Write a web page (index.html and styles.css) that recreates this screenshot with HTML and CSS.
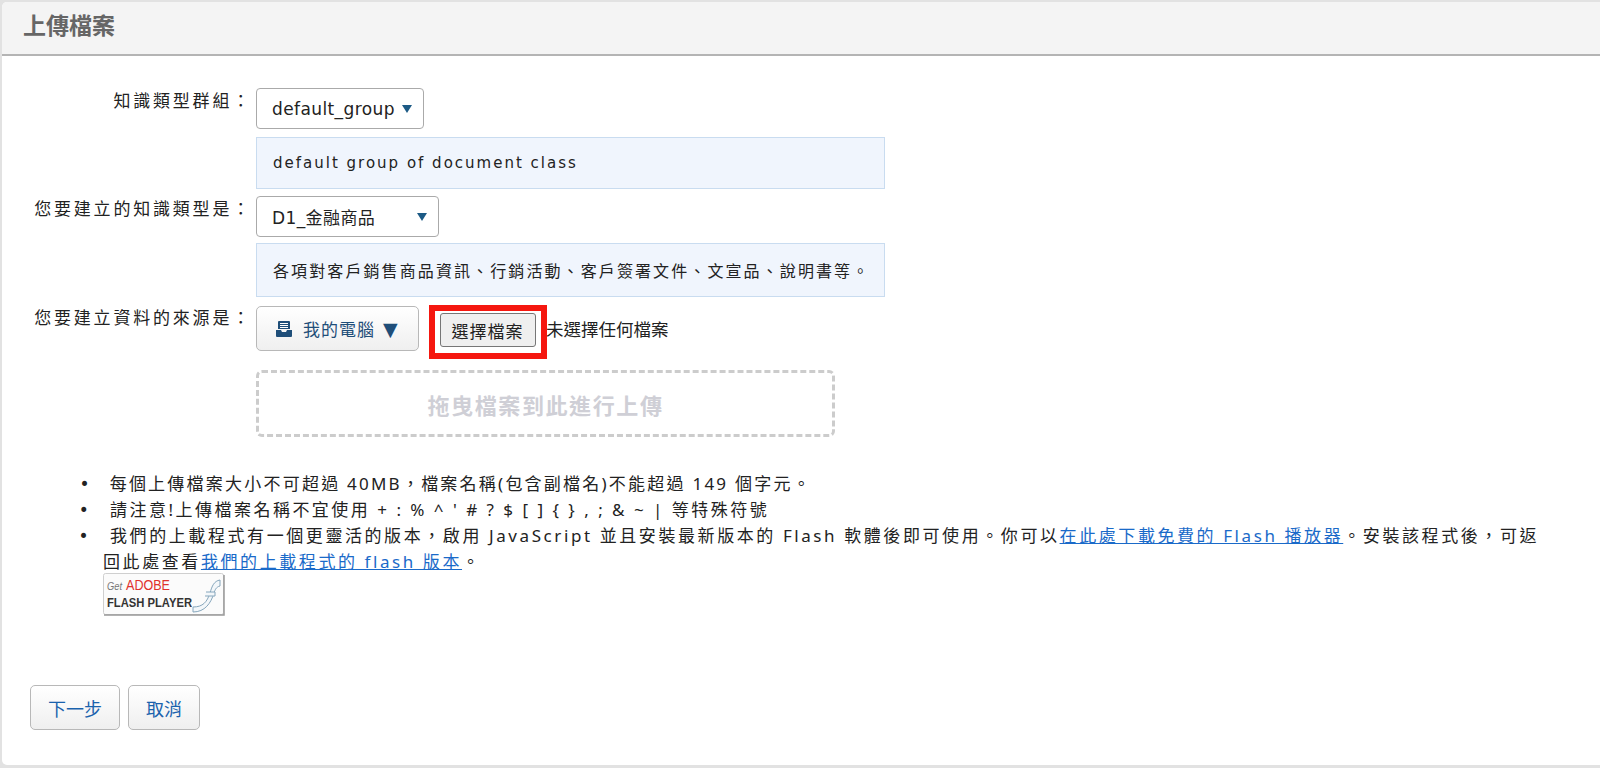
FILE: index.html
```html
<!DOCTYPE html>
<html lang="zh-Hant">
<head>
<meta charset="utf-8">
<title>上傳檔案</title>
<link rel="stylesheet" href="styles.css">
</head>
<body>
<main class="panel">
  <header class="panel-head"><h1>上傳檔案</h1></header>
  <div class="panel-body">
    <form class="form">
      <div class="label">知識類型群組：</div>
      <div class="field">
        <div class="select select-group">default_group<span class="caret"></span></div>
        <div class="info info-latin">default group of document class</div>
      </div>
      <div class="label">您要建立的知識類型是：</div>
      <div class="field">
        <div class="select select-type">D1_金融商品<span class="caret"></span></div>
        <div class="info info-cjk">各項對客戶銷售商品資訊、行銷活動、客戶簽署文件、文宣品、說明書等。</div>
      </div>
      <div class="label">您要建立資料的來源是：</div>
      <div class="field">
        <div class="source-row">
          <button type="button" class="btn btn-source">
            <svg class="drawer" viewBox="0 0 18 18" aria-hidden="true"><path d="M4 1h10a1 1 0 0 1 1 1v7H3V2a1 1 0 0 1 1-1z" fill="#1f4e79"/><path d="M5 3.5h8M5 5.5h8M5 7.5h8" stroke="#fff" stroke-width="1"/><path d="M1 10h5l1 2h4l1-2h5v6a1 1 0 0 1-1 1H2a1 1 0 0 1-1-1z" fill="#1f4e79"/></svg>
            <span>我的電腦</span><span class="arrow">▼</span>
          </button>
          <span class="highlight"><button type="button" class="file-btn">選擇檔案</button></span>
          <span class="file-none">未選擇任何檔案</span>
        </div>
        <div class="dropzone">拖曳檔案到此進行上傳</div>
      </div>
    </form>
    <ul class="notes">
      <li class="note-size">&nbsp;每個上傳檔案大小不可超過 40MB，檔案名稱(包含副檔名)不能超過 149 個字元。</li>
      <li>&nbsp;請注意!上傳檔案名稱不宜使用 + : % ^ ' # ? $ [ ] { } , ; &amp; ~ | 等特殊符號</li>
      <li class="note-flash">&nbsp;我們的上載程式有一個更靈活的版本，啟用 JavaScript 並且安裝最新版本的 Flash 軟體後即可使用。你可以<a href="#">在此處下載免費的 Flash 播放器</a>。安裝該程式後，可返回此處查看<a href="#">我們的上載程式的 flash 版本</a>。</li>
    </ul>
    <div class="badge">
      <svg viewBox="0 0 122 43" width="122" height="43" role="img" aria-label="Get Adobe Flash Player">
        <rect x="0.5" y="0.5" width="120" height="41" rx="2" fill="#fbfbfb" stroke="#cfcfcf"/>
        <path d="M1 42h120V2" fill="none" stroke="#999" stroke-width="1.5"/>
        <text x="4" y="17" class="b-get" textLength="15" lengthAdjust="spacingAndGlyphs">Get</text>
        <text x="23" y="17" class="b-adobe" textLength="44" lengthAdjust="spacingAndGlyphs">ADOBE</text>
        <text x="4" y="34" class="b-flash" textLength="85" lengthAdjust="spacingAndGlyphs">FLASH PLAYER</text>
        <path d="M90 34c10 0 14-5 17-14 2-7 4-12 10-13v6c-4 1-5 4-6 7-3 10-9 19-21 19z" fill="#f3f7fa" stroke="#86a6bc" stroke-width="1"/>
        <path d="M103 19h9v4h-10" fill="#f3f7fa" stroke="#86a6bc" stroke-width="1"/>
      </svg>
    </div>
    <div class="actions">
      <button type="button" class="btn btn-action btn-next">下一步</button>
      <button type="button" class="btn btn-action btn-cancel">取消</button>
    </div>
  </div>
</main>
</body>
</html>
```

FILE: styles.css
```css
* { box-sizing: border-box; }
html, body { height: 100%; }
body {
  margin: 0;
  padding: 2px 0 3px 2px;
  background: #e2e2e2;
  font-family: "DejaVu Sans", "Noto Sans CJK TC", sans-serif;
  font-size: 15px;
  color: #222;
  overflow: hidden;
}
.panel {
  height: 100%;
  background: #fff;
  border-radius: 5px 0 0 5px;
  overflow: hidden;
}
.panel-head {
  height: 54px;
  background: #f4f4f4;
  border-bottom: 2px solid #b4b4b4;
  padding: 6px 0 0 21px;
}
.panel-head h1 {
  margin: 0;
  font-size: 23px;
  line-height: 32px;
  font-weight: 700;
  color: #666;
  font-family: "Noto Sans CJK TC", sans-serif;
}
.panel-body { padding: 32px 0 0 0; }
.form {
  display: grid;
  grid-template-columns: 250px 1fr;
  column-gap: 4px;
}
.label {
  text-align: right;
  font-size: 17px;
  letter-spacing: 2.8px;
  line-height: 22px;
  padding-top: 2px;
}
.field { display: flex; flex-direction: column; align-items: flex-start; }
.select {
  height: 41px;
  display: flex;
  align-items: center;
  padding-left: 15px;
  background: #fff;
  border: 1px solid #aaa;
  border-radius: 4px;
  font-size: 17px;
  letter-spacing: 0.4px;
  position: relative;
}
.select-group { width: 168px; }
.select-type { width: 183px; }
.caret {
  position: absolute;
  right: 11px;
  top: 16px;
  border-left: 5px solid transparent;
  border-right: 5px solid transparent;
  border-top: 8px solid #1c5a85;
}
.info {
  width: 629px;
  display: flex;
  align-items: center;
  padding-left: 16px;
  background: #f0f5fd;
  border: 1px solid #c9dcf0;
}
.info-latin {
  height: 52px;
  margin: 8px 0 7px;
  font-size: 15px;
  letter-spacing: 2px;
}
.info-cjk {
  height: 54px;
  margin: 6px 0 8px;
  font-size: 16px;
  letter-spacing: 2.1px;
}
.source-row { display: flex; align-items: flex-start; height: 54px; }
.btn {
  background: linear-gradient(#fff, #efefef);
  border: 1px solid #b8b8b8;
  border-radius: 5px;
  font-family: inherit;
  color: #1f4e79;
  cursor: pointer;
}
.btn-source {
  width: 163px;
  height: 45px;
  margin-top: 1px;
  display: flex;
  align-items: center;
  gap: 10px;
  padding: 0 0 0 18px;
  font-size: 17px;
  letter-spacing: 1px;
}
.arrow { font-size: 19px; margin-left: -2px; }
.drawer { width: 18px; height: 18px; }
.highlight {
  display: flex;
  align-items: flex-start;
  justify-content: center;
  width: 118px;
  height: 54px;
  margin-left: 10px;
  padding: 2px 1px 0 0;
  border: 6px solid #f5170f;
}
.file-btn {
  flex: none;
  width: 96px;
  height: 34px;
  padding: 0;
  background: #efefef;
  border: 1px solid #767676;
  border-radius: 3px;
  font-family: inherit;
  font-size: 17px;
  letter-spacing: 1px;
  color: #222;
}
.file-none {
  font-size: 17.5px;
  line-height: 40px;
  margin: 5px 0 0 -1px;
}
.dropzone {
  width: 579px;
  height: 67px;
  margin-top: 11px;
  display: flex;
  align-items: center;
  justify-content: center;
  border: 3px dashed #cccccc;
  border-radius: 6px;
  font-size: 22px;
  letter-spacing: 1.6px;
  font-weight: 700;
  color: #cfcfd6;
}
.notes {
  margin: 34px 0 0;
  padding: 0 52px 0 101px;
  font-family: "Noto Sans", "Noto Sans CJK TC", sans-serif;
  font-size: 17px;
  line-height: 26px;
  letter-spacing: 2.49px;
}
.note-size { letter-spacing: 2.23px; }
.note-flash { letter-spacing: 2.58px; }
.notes li::marker { content: "•\2009\2009"; font-family: "DejaVu Sans", sans-serif; }
.notes a { color: #1a6ac9; text-decoration: underline; }
.badge { margin: -2px 0 0 101px; height: 44px; line-height: 0; }
.badge text { font-family: "Liberation Sans", sans-serif; }
.b-get { font-size: 10px; font-style: italic; fill: #777; }
.b-adobe { font-size: 14px; fill: #e0312c; }
.b-flash { font-size: 13px; font-weight: 700; fill: #333; }
.actions { display: flex; gap: 8px; margin: 68px 0 0 28px; }
.btn-action {
  height: 45px;
  font-size: 18px;
  color: #1a62ad;
  padding: 0;
}
.btn-next { width: 90px; }
.btn-cancel { width: 72px; }
```
